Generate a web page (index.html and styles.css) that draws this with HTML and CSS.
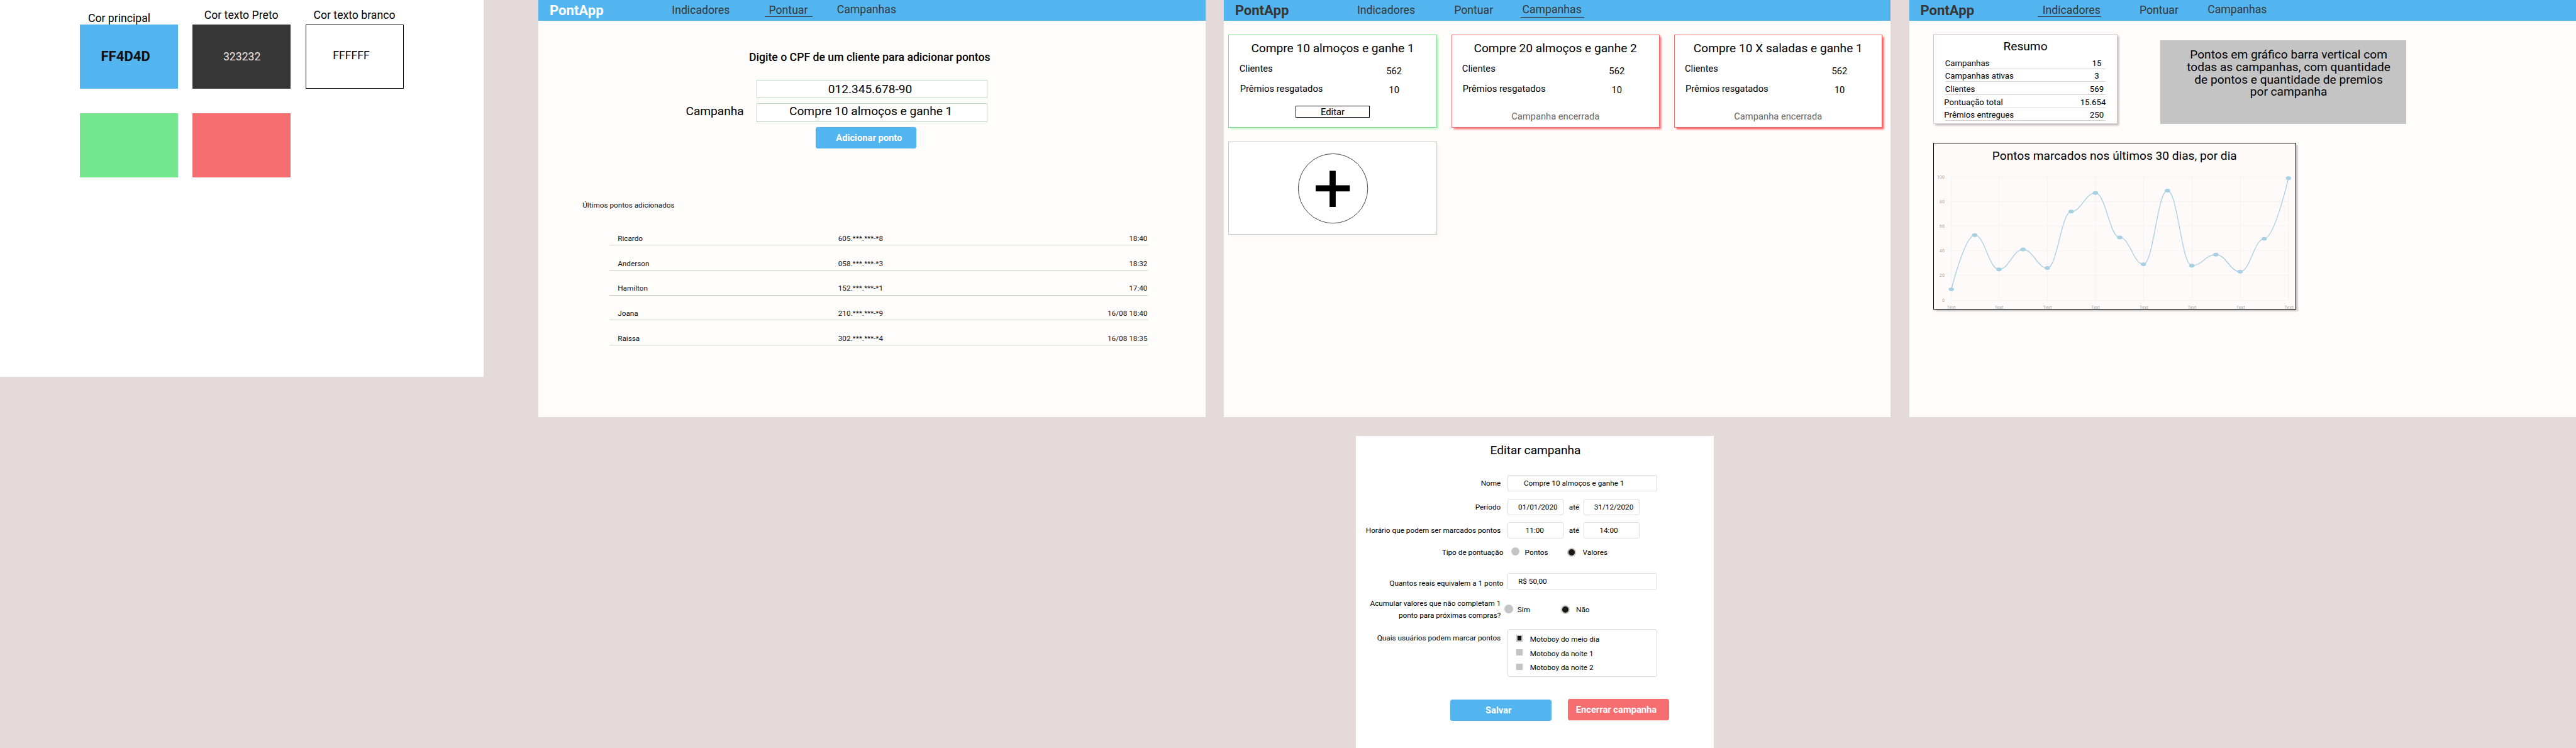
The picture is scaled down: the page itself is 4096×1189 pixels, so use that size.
FILE: index.html
```html
<!DOCTYPE html>
<html lang="pt-BR">
<head>
<meta charset="utf-8">
<title>PontApp</title>
<link rel="stylesheet" href="styles.css">
</head>
<body>
<div class="board">

  <section class="frame frame-palette">
    <div class="palette">
      <figure class="swatch-item">
        <figcaption class="cap cap-main">Cor principal</figcaption>
        <div class="swatch blue"><b class="code code-main">FF4D4D</b></div>
      </figure>
      <figure class="swatch-item">
        <figcaption class="cap cap-dark">Cor texto Preto</figcaption>
        <div class="swatch dark"><span class="code code-dark">323232</span></div>
      </figure>
      <figure class="swatch-item">
        <figcaption class="cap cap-white">Cor texto branco</figcaption>
        <div class="swatch white"><span class="code code-white">FFFFFF</span></div>
      </figure>
      <div class="swatch green"></div>
      <div class="swatch red"></div>
    </div>
  </section>

  <section class="frame screen frame-score">
    <header class="topbar">
      <span class="brand brand-light">PontApp</span>
      <a class="link">Indicadores</a>
      <a class="link link-mid current">Pontuar</a>
      <a class="link link-last">Campanhas</a>
    </header>
    <h1 class="score-title">Digite o CPF de um cliente para adicionar pontos</h1>
    <div class="score-form">
      <div class="score-input cpf">012.345.678-90</div>
      <span class="score-label">Campanha</span>
      <div class="score-input campaign">Compre 10 almoços e ganhe 1</div>
    </div>
    <div class="btn btn-blue btn-add">Adicionar ponto</div>
    <h2 class="latest-title">Últimos pontos adicionados</h2>
    <ul class="latest">
      <li><span>Ricardo</span><span>605.***.***-*8</span><span>18:40</span></li>
      <li><span>Anderson</span><span>058.***.***-*3</span><span>18:32</span></li>
      <li><span>Hamilton</span><span>152.***.***-*1</span><span>17:40</span></li>
      <li><span>Joana</span><span>210.***.***-*9</span><span>16/08 18:40</span></li>
      <li><span>Raissa</span><span>302.***.***-*4</span><span>16/08 18:35</span></li>
    </ul>
  </section>

  <section class="frame screen frame-campaigns">
    <header class="topbar">
      <span class="brand">PontApp</span>
      <a class="link">Indicadores</a>
      <a class="link link-mid">Pontuar</a>
      <a class="link link-last current">Campanhas</a>
    </header>
    <div class="cards">
      <article class="card card-active">
        <h2>Compre 10 almoços e ganhe 1</h2>
        <dl><dt>Clientes</dt><dd>562</dd><dt class="second">Prêmios resgatados</dt><dd class="second">10</dd></dl>
        <div class="edit">Editar</div>
      </article>
      <article class="card card-closed">
        <h2>Compre 20 almoços e ganhe 2</h2>
        <dl><dt>Clientes</dt><dd>562</dd><dt class="second">Prêmios resgatados</dt><dd class="second">10</dd></dl>
        <p class="closed">Campanha encerrada</p>
      </article>
      <article class="card card-closed card-strong">
        <h2>Compre 10 X saladas e ganhe 1</h2>
        <dl><dt>Clientes</dt><dd>562</dd><dt class="second">Prêmios resgatados</dt><dd class="second">10</dd></dl>
        <p class="closed">Campanha encerrada</p>
      </article>
      <article class="card card-new">
        <svg class="plus" viewBox="0 0 151 151">
          <circle cx="75.5" cy="75.5" r="75" fill="none" stroke="#000"/>
          <path d="M38 68.7H68V37.3H81.3V68.7H111.7V81.7H81.3V115.3H68V81.7H38Z"/>
        </svg>
      </article>
    </div>
  </section>

  <section class="frame screen frame-metrics">
    <header class="topbar">
      <span class="brand">PontApp</span>
      <a class="link current">Indicadores</a>
      <a class="link link-mid">Pontuar</a>
      <a class="link link-last">Campanhas</a>
    </header>
    <div class="metrics-row">
      <article class="summary">
        <h2>Resumo</h2>
        <div class="sum-row"><span>Campanhas</span><span class="val">15</span></div>
        <div class="sum-row"><span>Campanhas ativas</span><span class="val">3</span></div>
        <div class="sum-row"><span>Clientes</span><span class="val">569</span></div>
        <div class="sum-row"><span class="out">Pontuação total</span><span class="val wide">15.654</span></div>
        <div class="sum-row"><span class="out">Prêmios entregues</span><span class="val">250</span></div>
      </article>
      <div class="placeholder">Pontos em gráfico barra vertical com<br>todas as campanhas, com quantidade<br>de pontos e quantidade de premios<br>por campanha</div>
    </div>
    <article class="chart">
      <h2>Pontos marcados nos últimos 30 dias, por dia</h2>
      <svg class="plot" viewBox="1.4 50 780.3 308.6">
        <g fill="none" stroke="#f3f3f3" stroke-width="1.6">
          <path d="M39.1 73.7H768M39.1 127H768M39.1 180H768M39.1 233H768M39.1 286H768M39.1 340H768"/>
          <path d="M39.1 73.7V340M142 73.7V340M246.4 73.7V340M350.3 73.7V340M454.8 73.7V340M558.9 73.7V340M663.7 73.7V340M768 73.7V340"/>
        </g>
        <g class="ticks" text-anchor="end">
          <text x="24.6" y="76.8">100</text><text x="24.6" y="129.8">80</text><text x="24.6" y="182.8">60</text>
          <text x="24.6" y="235.8">40</text><text x="24.6" y="288.8">20</text><text x="24.6" y="342.8">0</text>
        </g>
        <g class="ticks" text-anchor="middle">
          <text x="39.1" y="357.8">Text</text><text x="142" y="357.8">Text</text><text x="246.4" y="357.8">Text</text><text x="350.3" y="357.8">Text</text>
          <text x="454.8" y="357.8">Text</text><text x="558.9" y="357.8">Text</text><text x="663.7" y="357.8">Text</text><text x="768.2" y="357.8">Text</text>
        </g>
        <g id="series"></g>
      </svg>
    </article>
  </section>

  <section class="frame frame-edit">
    <h1>Editar campanha</h1>
    <div class="row row-name">
      <span class="lbl">Nome</span>
      <div class="field field-wide pad-name">Compre 10 almoços e ganhe 1</div>
    </div>
    <div class="row">
      <span class="lbl">Período</span>
      <div class="field pad-date">01/01/2020</div><span class="until">até</span><div class="field pad-date">31/12/2020</div>
    </div>
    <div class="row">
      <span class="lbl">Horário que podem ser marcados pontos</span>
      <div class="field pad-from">11:00</div><span class="until">até</span><div class="field pad-to">14:00</div>
    </div>
    <div class="row row-type">
      <span class="lbl">Tipo de pontuação</span>
      <i class="radio"></i><span class="opt">Pontos</span>
      <i class="radio on"></i><span class="opt">Valores</span>
    </div>
    <div class="row row-value">
      <span class="lbl">Quantos reais equivalem a 1 ponto</span>
      <div class="field field-wide pad-date">R$ 50,00</div>
    </div>
    <div class="row row-keep">
      <span class="lbl">Acumular valores que não completam 1<br>ponto para próximas compras?</span>
      <i class="radio"></i><span class="opt">Sim</span>
      <i class="radio on"></i><span class="opt">Não</span>
    </div>
    <div class="row row-users">
      <span class="lbl">Quais usuários podem marcar pontos</span>
      <ul class="users">
        <li><i class="check on"></i>Motoboy do meio dia</li>
        <li><i class="check"></i>Motoboy da noite 1</li>
        <li><i class="check"></i>Motoboy da noite 2</li>
      </ul>
    </div>
    <div class="actions">
      <div class="btn btn-blue btn-save">Salvar</div>
      <div class="btn btn-red btn-close">Encerrar campanha</div>
    </div>
  </section>

</div>
<script src="chart.js"></script>
</body>
</html>
```
FILE: styles.css
```css
/* 1rem = 10 board units; the board is 556.3rem wide */
html { font-size: calc(100vw / 556.3); }
* { box-sizing: border-box; }
body, h1, h2, p, ul, dl, dd, figure { margin: 0; padding: 0; }
ul { list-style: none; }
h1, h2 { font-weight: 400; }
body {
  height: 100vh;
  overflow: hidden;
  background: #e3dad9;
  color: #000;
  font-family: Roboto, sans-serif;
  font-size: 1.6rem;
  line-height: 1;
}
.board { position: relative; width: 100vw; height: 100vh; overflow: hidden; white-space: nowrap; }

/* frames sit freely on the board */
.frame { position: absolute; top: 0; background: #fff; }
.frame-palette { left: 0; width: 104.5rem; height: 81.4rem; }
.screen { width: 144rem; height: 90rem; background: #fffdfc; }
.frame-score { left: 116.3rem; }
.frame-campaigns { left: 264.3rem; }
.frame-metrics { left: 412.3rem; }
.frame-edit { left: 292.8rem; top: 94.1rem; width: 77.3rem; height: 67.6rem; }

/* palette */
.palette { display: grid; grid-template-columns: repeat(3, 21.2rem); column-gap: 3.2rem; row-gap: 5.2rem; padding-left: 17.2rem; }
.cap { height: 5.3rem; font-size: 2.4rem; padding-top: 2.18rem; }
.cap-main { padding: 2.86rem 0 0 1.8rem; }
.cap-dark { padding-left: 2.5rem; }
.cap-white { padding-left: 1.7rem; }
.swatch { height: 13.9rem; display: flex; align-items: flex-start; }
.blue { background: #52b5ef; }
.dark { background: #363636; }
.white { border: 1px solid #000; }
.green { background: #74e68e; }
.red { background: #f76e70; }
.code { font-size: 2.4rem; }
.code-main { font-size: 3rem; color: #111; margin: 5.4rem 0 0 4.6rem; }
.code-dark { color: #eee4e3; margin: 5.8rem 0 0 6.6rem; }
.code-white { margin: 5.37rem 0 0 5.75rem; }

/* top bar */
.topbar { display: grid; grid-template-columns: 28.8rem 20.94rem 14.7rem auto; height: 4.5rem; background: #52b5ef; color: #373737; }
.brand { padding: .78rem 0 0 2.4rem; font-size: 3rem; font-weight: 700; }
.brand-light { color: #fff; }
.link { position: relative; justify-self: start; padding-top: 1.08rem; font-size: 2.4rem; }
.link-last { padding-top: 1rem; }
.current::after { content: ""; position: absolute; left: -1rem; top: 3.5rem; width: 13.7rem; height: 1px; background: #323232; }
.link-mid.current::after { left: -.94rem; width: 10.4rem; }
.link-last.current::after { left: -.34rem; top: 3.7rem; }

/* buttons */
.btn { width: 21.8rem; height: 4.6rem; border-radius: .5rem; color: #fff; font-size: 2rem; font-weight: 700; box-shadow: 0 0 .3rem rgba(0, 0, 0, .08); }
.btn-blue { background: #52b5ef; }
.btn-red { background: #f76e70; }
.btn-add { margin: 1.2rem 0 0 59.8rem; padding: 1.33rem 0 0 4.45rem; }

/* score screen */
.score-title { margin: 6.83rem 0 3.47rem 45.45rem; font-size: 2.4rem; font-weight: 500; }
.score-form { display: grid; grid-template-columns: 15.3rem 49.8rem; grid-auto-rows: 4rem; row-gap: 1.1rem; margin-left: 31.8rem; font-size: 2.6rem; }
.score-input { grid-column: 2; border: 1px solid #b9d9c3; background: #fff; }
.cpf { padding: .6rem 0 0 15.3rem; }
.score-label { padding-top: .41rem; }
.campaign { padding: .27rem 0 0 6.92rem; }
.latest-title { margin: 11.5rem 0 2.4rem 9.5rem; font-size: 1.6rem; color: #111; }
.latest { width: 116.2rem; margin-left: 15.3rem; color: #111; }
.latest li { display: grid; grid-template-columns: 47.6rem 1fr auto; align-items: end; height: 5.4rem; padding: 0 0 .48rem 1.8rem; border-bottom: 1px solid #ccc; }

/* campaign cards */
.cards { display: grid; grid-template-columns: repeat(3, 45rem); grid-auto-rows: 20.1rem; column-gap: 3.1rem; row-gap: 3rem; padding: 3rem 0 0 1rem; }
.card { background: #fff; border: 1px solid #c6cac6; box-shadow: .4rem .4rem .4rem #f9f2f2; text-align: center; font-size: 2rem; padding-top: 1.48rem; }
.card-active { border-color: #74e08c; box-shadow: .4rem .4rem .4rem #c4f3c8; }
.card-closed { border-color: #f36d70; box-shadow: .4rem .4rem .4rem #f76e70; }
.card-strong { box-shadow: .4rem .4rem .4rem #ff4d4d; }
.card h2 { font-size: 2.6rem; margin-bottom: 2.15rem; }
.card dl { display: grid; grid-template-columns: 30.4rem 6rem; grid-template-rows: 4.4rem 2.2rem; padding-left: 2.22rem; text-align: left; }
.card dd { padding-top: .5rem; text-align: center; }
.card dt.second { padding-left: .13rem; }
.card dd.second { padding-top: .2rem; }
.edit { width: 16rem; height: 2.6rem; margin: 2.34rem auto 0; padding-top: .28rem; border: 1px solid #000; background: #fffcfc; }
.closed { margin-top: 3.7rem; color: #666; }
.card-new { padding: 2.4rem 0 0 .1rem; }
.plus { display: block; width: 15.1rem; height: 15.1rem; margin: 0 auto; overflow: visible; }

/* metrics */
.metrics-row { display: flex; align-items: flex-start; padding: 2.9rem 0 0 5.2rem; }
.summary { width: 39.8rem; height: 19.3rem; padding: 1.2rem 2.4rem 0; border: 1px solid #d5c9ca; background: #fff; box-shadow: .4rem .4rem .4rem rgba(0, 0, 0, .25); font-size: 1.8rem; }
.summary h2 { font-size: 2.6rem; text-align: center; margin-bottom: .79rem; }
.sum-row { display: flex; justify-content: space-between; height: 2.8rem; padding-top: .62rem; border-bottom: 1px solid #d9cfcf; }
.out { margin-left: -.2rem; }
.val { width: 3.9rem; text-align: center; }
.val.wide { width: auto; }
.placeholder { width: 53.1rem; height: 18rem; margin: 1.3rem 0 0 9.2rem; padding: 1.8rem 0 0 2.4rem; background: #c4c4c4; font-size: 2.6rem; line-height: 2.68rem; text-align: center; }
.chart { width: 78.3rem; height: 36rem; margin: 4.1rem 0 0 5.2rem; border: 1px solid #000; background: #fffafa; box-shadow: .4rem .4rem .4rem rgba(0, 0, 0, .25); }
.chart h2 { height: 4.86rem; padding-top: 1.34rem; font-size: 2.6rem; text-align: center; }
.plot { display: block; width: 100%; height: 30.86rem; }
.ticks { font-size: 10px; fill: #aaa; }

/* edit form */
.frame-edit h1 { height: 8.5rem; padding: 1.81rem 0 0 .3rem; font-size: 2.6rem; text-align: center; }
.row { display: flex; align-items: flex-start; margin-bottom: 1.6rem; }
.lbl { width: 31.3rem; margin-right: 1.44rem; padding-top: 1.07rem; text-align: right; }
.field { width: 12.16rem; height: 3.5rem; padding-top: .94rem; border: 1px solid #ddd; border-radius: .4rem; }
.field-wide { width: 32.3rem; }
.pad-name { padding-left: 3.4rem; }
.pad-date { padding-left: 2.2rem; }
.pad-from { padding-left: 3.77rem; }
.pad-to { padding-left: 3.37rem; }
.until { width: 4.22rem; padding: 1.07rem 0 0 .3rem; text-align: center; }
.radio { width: 1.9rem; height: 1.9rem; border-radius: 50%; background: #c4c4c4; }
.radio.on { margin-top: .2rem; border: .3rem solid #c4c4c4; background: #1c1616; }
.row-type { height: 2.1rem; margin: 1.8rem 0 3.6rem; }
.row-type .lbl { width: 31.85rem; margin-right: 1.65rem; padding-top: .47rem; }
.row-type .opt { width: 10.3rem; padding: .47rem 0 0 1.1rem; }
.row-type .on + .opt { padding-left: 1.4rem; }
.row-value .lbl { width: 31.85rem; margin-right: .89rem; padding-top: 1.47rem; }
.row-keep { height: 5.2rem; line-height: 2.6rem; margin: 1.74rem 0 1.56rem; }
.row-keep .lbl { padding: 0; margin-right: .78rem; }
.row-keep .radio { margin-top: 1.46rem; }
.row-keep .radio.on { margin-top: 1.66rem; }
.row-keep .opt { width: 10.34rem; padding: 1.96rem 0 0 .92rem; line-height: 1; }
.row-keep .on + .opt { padding-left: 1.35rem; }
.row-users .lbl { padding-top: 1.3rem; }
.users { width: 32.3rem; height: 10.4rem; padding: 1.16rem 0 0 1.76rem; border: 1px solid #ddd; border-radius: .4rem; }
.users li { display: flex; height: 3.1rem; padding-top: .2rem; }
.check { width: 1.4rem; height: 1.4rem; margin: -.2rem 1.58rem 0 0; background: #c4c4c4; }
.check.on { border: 2px solid #c4c4c4; background: #111; }
.actions { display: flex; gap: 3.6rem; margin: 4.7rem 0 0 20.4rem; }
.btn-save { margin-top: .1rem; padding: 1.36rem 0 0 7.6rem; }
.btn-close { padding: 1.36rem 0 0 1.72rem; }
```
FILE: chart.js
```js
// Daily points series, in the plot's own coordinates
const points = [
  [39.1, 316], [89.6, 199], [142, 273], [194, 230], [246.4, 270],
  [298, 148], [350.3, 108], [402.8, 204], [453.9, 262], [505.8, 103],
  [558.4, 265], [610.3, 241], [662.8, 278], [714.8, 207], [767.2, 76]
];

let d = `M${points[0]}`;
for (let i = 1; i < points.length; i++) {
  const [x0, y0] = points[i - 1];
  const [x1, y1] = points[i];
  const k = (x1 - x0) * 0.42;
  const c1 = i === 1 ? [x0, y0] : [x0 + k, y0];
  const c2 = i === points.length - 1 ? [x1, y1] : [x1 - k, y1];
  d += `C${c1} ${c2} ${x1},${y1}`;
}

document.getElementById("series").innerHTML =
  `<path d="${d}" fill="none" stroke="#a6cfe3" stroke-width="1.8"/>` +
  points.map(([x, y]) => `<ellipse cx="${x}" cy="${y}" rx="5.8" ry="4" fill="#a6cfe3"/>`).join("");
```
